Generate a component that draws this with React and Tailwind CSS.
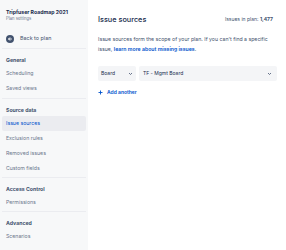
import React from "react";

const font = { fontFamily: "Inter, 'Noto Sans', sans-serif" };

function Section({ title, items, active }) {
  return (
    <div>
      <div className="pt-[8px] pb-[2px] px-[4px] text-[5.2px] leading-[7px] font-bold text-[#42526e]">
        {title}
      </div>
      {items.map((item) => (
        <div
          key={item}
          className={
            "h-[15px] flex items-center px-[4px] text-[5.2px] rounded-[2px] " +
            (item === active ? "bg-[#ebecf0] text-[#0052cc]" : "text-[#6b778c]")
          }
        >
          {item}
        </div>
      ))}
    </div>
  );
}

function Chevron() {
  return (
    <svg width="5" height="4" viewBox="0 0 10 8" className="text-[#42526e]">
      <path d="M2 2l3 3 3-3" fill="none" stroke="currentColor" strokeWidth="1.6" />
    </svg>
  );
}

export default function App() {
  return (
    <div className="flex w-[286px] h-[250px] bg-white overflow-hidden" style={font}>
      <aside className="w-[88px] shrink-0 bg-[#f7f8f9] px-[2px]">
        <div className="pt-[9px] px-[4px]">
          <div className="text-[5.2px] leading-[7px] font-bold text-[#172b4d] whitespace-nowrap">
            Tripfuser Roadmap 2021
          </div>
          <div className="text-[4.2px] leading-[6px] text-[#6b778c]">Plan settings</div>
        </div>
        <div className="mt-[9px] h-[15px] flex items-center px-[4px] gap-[6px] text-[5.4px] text-[#42526e]">
          <span className="w-[8px] h-[8px] rounded-full bg-[#42526e] flex items-center justify-center">
            <svg width="6" height="6" viewBox="0 0 10 10">
              <path d="M8 5H2.5M5 2.5L2.5 5 5 7.5" fill="none" stroke="white" strokeWidth="1.6" />
            </svg>
          </span>
          Back to plan
        </div>
        <div className="mt-[2px] h-px bg-[#ebecf0]" />
        <Section title="General" items={["Scheduling", "Saved views"]} />
        <div className="mt-[2px] h-px bg-[#ebecf0]" />
        <Section
          title="Source data"
          items={["Issue sources", "Exclusion rules", "Removed issues", "Custom fields"]}
          active="Issue sources"
        />
        <div className="mt-[1px] h-px bg-[#ebecf0]" />
        <Section title="Access Control" items={["Permissions"]} />
        <div className="mt-[1px] h-px bg-[#ebecf0]" />
        <Section title="Advanced" items={["Scenarios"]} />
      </aside>

      <main className="flex-1 pl-[10px] pr-[9px] pt-[14px]">
        <div className="flex items-center justify-between">
          <h1 className="text-[7.3px] leading-[12px] font-medium text-[#172b4d]">Issue sources</h1>
          <span className="text-[5px] text-[#42526e] pr-[4px]">
            Issues in plan: <span className="font-bold">1,477</span>
          </span>
        </div>
        <p className="mt-[8px] text-[5.2px] leading-[10px] text-[#42526e]">
          Issue sources form the scope of your plan. If you can't find a specific issue,{" "}
          <span className="text-[#0052cc] font-semibold">learn more about missing issues</span>.
        </p>
        <div className="mt-[12px] flex gap-[3px]">
          <div className="w-[38px] h-[15px] bg-[#f4f5f7] rounded-[2px] flex items-center justify-between px-[3px] text-[5px] text-[#172b4d]">
            Board
            <Chevron />
          </div>
          <div className="flex-1 h-[15px] bg-[#f4f5f7] rounded-[2px] flex items-center justify-between pl-[4px] pr-[5px] text-[5px] text-[#172b4d]">
            TF - Mgmt Board
            <Chevron />
          </div>
        </div>
        <div className="mt-[8px] flex items-center gap-[4px] text-[5px] leading-[6px] font-semibold text-[#0052cc]">
          <svg width="5" height="5" viewBox="0 0 10 10">
            <path d="M5 1v8M1 5h8" stroke="currentColor" strokeWidth="1.8" />
          </svg>
          Add another
        </div>
      </main>
    </div>
  );
}
